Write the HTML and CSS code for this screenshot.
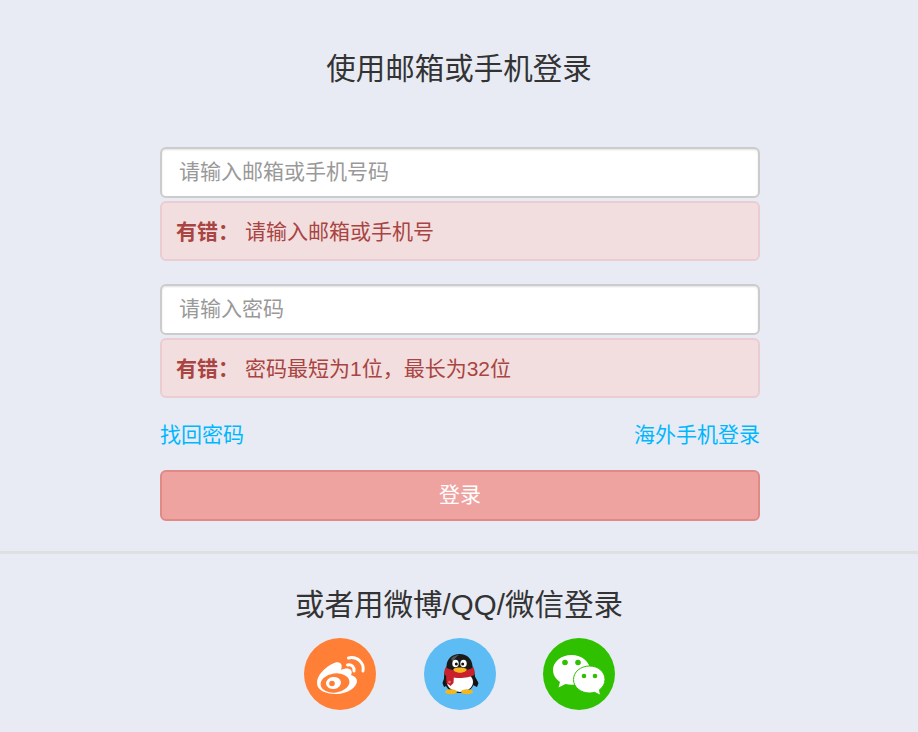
FILE: index.html
```html
<!DOCTYPE html>
<html lang="zh">
<head>
    <meta charset="UTF-8">
    <title>登录</title>
    <link rel="stylesheet" href="styles.css">
</head>
<body>
    <h1 class="titulo titulo-login">使用邮箱或手机登录</h1>

    <form class="formulario">
        <input class="campo" type="text" placeholder="请输入邮箱或手机号码">
        <div class="alerta"><strong>有错：</strong><span>请输入邮箱或手机号</span></div>

        <input class="campo campo-segundo" type="password" placeholder="请输入密码">
        <div class="alerta"><strong>有错：</strong><span>密码最短为1位，最长为32位</span></div>

        <div class="enlaces">
            <a href="#">找回密码</a>
            <a href="#">海外手机登录</a>
        </div>

        <button class="boton" type="button">登录</button>
    </form>

    <hr class="separador">

    <h2 class="titulo titulo-social">或者用微博/QQ/微信登录</h2>

    <div class="sociales">
        <a class="social social-weibo" href="#" aria-label="微博">
            <svg width="72" height="72" viewBox="0 0 72 72">
                <path fill="#fff" d="M13 45c0-6 4-11 9-15 5-4 11-7 14-5 2 1 2 4 1 7 4-2 8-2 10 0 1 2 1 3 0 5 3 1 6 3 6 6 0 6-9 13-21 13-11 0-19-4-19-11z"/>
                <ellipse cx="31" cy="45" rx="14.500" ry="9.500" fill="#ff7f36" transform="rotate(-8 31 45)"/>
                <ellipse cx="29.500" cy="45" rx="7.500" ry="6" fill="#fff" transform="rotate(-8 29.500 45)"/>
                <circle cx="28" cy="45.500" r="2.800" fill="#ff7f36"/>
                <path fill="none" stroke="#fff" stroke-width="3" stroke-linecap="round" d="M43.500 27c4-1 7 2 6.500 6"/>
                <path fill="none" stroke="#fff" stroke-width="3" stroke-linecap="round" d="M44.500 20c9-2 16 5 14.500 13"/>
            </svg>
        </a>
        <a class="social social-qq" href="#" aria-label="QQ">
            <svg width="72" height="72" viewBox="0 0 72 72">
                <path fill="#111" d="M22 35l-3.500 10 1.500 4 6-3zM49 35l5.500 10-1.500 4-6-3z"/>
                <path fill="#1a1a1a" d="M35.500 16c-8 0-12.500 5-13 12-1.500 4-2.500 8-2.500 12 0 9 6 15 15.500 15S51 49 51 40c0-4-1-8-2.500-12-.5-7-5-12-13-12z"/>
                <path fill="#555" d="M27 21c2-3 5-4 8-4-3 2-5 4-6 7z"/>
                <ellipse cx="36" cy="44" rx="13" ry="10" fill="#fff"/>
                <ellipse cx="31.500" cy="25.500" rx="3.200" ry="3.800" fill="#fff"/>
                <ellipse cx="39.500" cy="25.500" rx="3.200" ry="3.800" fill="#fff"/>
                <circle cx="32.300" cy="26" r="1.500" fill="#111"/>
                <circle cx="38.700" cy="26" r="1.500" fill="#111"/>
                <path fill="#c8202c" d="M22 29c5 5 22 5 27 0 2 3 2 6 1 8-6 4-23 4-29 0-1-2-1-5 1-8z"/>
                <path fill="#c8202c" d="M22 36h8l-.5 9-3 3-4-3z"/>
                <circle cx="25.500" cy="44" r="1.300" fill="#e8737a"/>
                <path fill="#f8b51d" d="M29.500 31c2-2 10-2 13 0 1 2-3.500 3.800-6.500 3.800s-7.500-1.800-6.500-3.800z"/>
                <ellipse cx="27" cy="53.800" rx="6" ry="2.500" fill="#f5b81c"/>
                <ellipse cx="43" cy="53.800" rx="6" ry="2.500" fill="#f5b81c"/>
            </svg>
        </a>
        <a class="social social-wechat" href="#" aria-label="微信">
            <svg width="72" height="72" viewBox="0 0 72 72">
                <path fill="#fff" d="M28.500 17C18 17 10 23.800 10 32c0 5 2.800 9 7 12l-1.500 5.500L22.500 46c2 .5 4 .8 6 .8 10.500 0 18.500-6.600 18.500-14.800S39 17 28.500 17z"/>
                <circle cx="22" cy="24.500" r="2.800" fill="#2fc100"/>
                <circle cx="35" cy="24.500" r="2.800" fill="#2fc100"/>
                <path fill="#fff" stroke="#2fc100" stroke-width="1" d="M46.500 28C37.500 28 30.500 34 30.500 41.500S37.500 55 46.500 55c1.800 0 3.500-.2 5-.7l6 3-1-5.500c3.500-2.500 5.500-6.300 5.500-10.300C62 34 55.500 28 46.500 28z"/>
                <circle cx="41" cy="38" r="2.300" fill="#2fc100"/>
                <circle cx="52" cy="38" r="2.300" fill="#2fc100"/>
            </svg>
        </a>
    </div>
</body>
</html>
```

FILE: styles.css
```css
* {
    box-sizing: border-box;
}

body {
    margin: 0;
    background-color: #e8ebf3;
    color: #333;
    font-family: "Liberation Sans", "Noto Sans CJK SC", sans-serif;
    font-size: 21px;
    overflow: hidden;
}

.titulo {
    margin: 0;
    font-size: 29.5px;
    font-weight: 400;
    line-height: 42px;
    text-align: center;
}

.titulo-login {
    padding-top: 48px;
}

.formulario {
    width: 600px;
    margin: 57px 0 0 160px;
}

.campo {
    display: block;
    width: 100%;
    height: 51px;
    padding: 0 17px 2px;
    border: 2px solid #ccc;
    border-radius: 6px;
    background-color: #fff;
    box-shadow: inset 0 1px 2px rgba(0, 0, 0, 0.12);
    font-family: inherit;
    font-size: 21px;
    color: #333;
    outline: none;
}

.campo::placeholder {
    color: #999;
    opacity: 1;
}

.campo-segundo {
    margin-top: 23px;
}

.alerta {
    display: flex;
    align-items: center;
    height: 60px;
    margin-top: 3px;
    padding: 0 14px 2px;
    border: 2px solid #ebccd1;
    border-radius: 6px;
    background-color: #f2dede;
    color: #a94442;
}

.alerta strong {
    margin-right: 6px;
}

.enlaces {
    display: flex;
    justify-content: space-between;
    margin-top: 22px;
    line-height: 30px;
}

.enlaces a {
    color: #00b7ff;
    text-decoration: none;
}

.boton {
    display: block;
    width: 100%;
    height: 51px;
    margin-top: 20px;
    padding: 0 0 6px;
    border: 2px solid #e08a88;
    border-radius: 6px;
    background-color: #efa3a0;
    color: #fff;
    font-family: inherit;
    font-size: 21px;
}

.separador {
    height: 3px;
    margin: 30px 0 0;
    border: 0;
    background-color: #dfe0e1;
}

.titulo-social {
    margin-top: 30px;
}

.sociales {
    display: flex;
    justify-content: center;
    gap: 47.5px;
    margin-top: 12px;
    margin-left: 1px;
}

.social {
    display: block;
    width: 72px;
    height: 72px;
    border-radius: 50%;
}

.social-weibo {
    background-color: #ff7f36;
}

.social-qq {
    background-color: #5cbcf3;
}

.social-wechat {
    background-color: #2fc100;
}
```
